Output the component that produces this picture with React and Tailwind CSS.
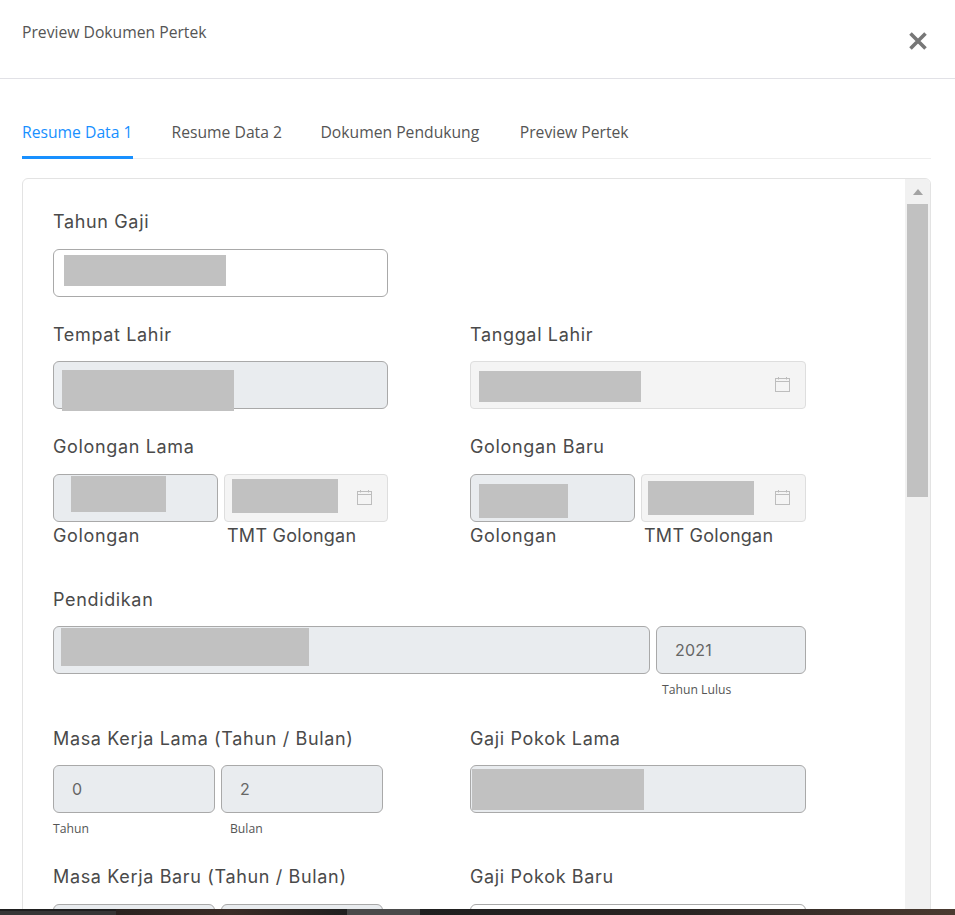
import React from 'react';

const labelFont = "font-['Inter','Liberation_Sans',sans-serif]";
const uiFont = "font-['Open_Sans','Noto_Sans',sans-serif]";

const Redact = ({ className }) => <div className={`absolute bg-[#c1c1c1] ${className}`} />;

const Label = ({ children, className = '' }) => (
  <div className={`h-6 leading-6 text-[18px] text-[#4a4a4a] tracking-[0.65px] whitespace-nowrap ${labelFont} ${className}`}>
    {children}
  </div>
);

const Small = ({ children, className = '' }) => (
  <div className={`h-4 leading-4 text-[12.2px] text-[#555] whitespace-nowrap ${uiFont} ${className}`}>{children}</div>
);

const Input = ({ children, className = '' }) => (
  <div className={`relative h-12 rounded-md border border-[#a9a9a9] bg-[#e9ecef] text-[16px] leading-[46px] text-[#666] tracking-[0.2px] ${labelFont} ${className}`}>
    {children}
  </div>
);

const DateInput = ({ children, className = '' }) => (
  <div className={`relative h-12 rounded-sm border border-[#dedede] bg-[#f4f4f4] ${className}`}>
    {children}
    <svg className="absolute right-[15px] top-[15px]" width="15" height="15" viewBox="0 0 15 15" fill="none" stroke="#bdbdbd" strokeWidth="1">
      <rect x="0.5" y="1.5" width="14" height="13" />
      <path d="M0.5 4.5H14.5M3.5 0V2.5M11.5 0V2.5" />
    </svg>
  </div>
);

const App = () => {
  return (
    <div className="relative h-[915px] w-[955px] overflow-hidden bg-white">
      <div className="flex h-[79px] justify-between border-b border-[#e1e1e6] pl-[22px] pr-[28px]">
        <div className={`pt-[21px] text-[15.7px] leading-[22px] text-[#555] ${uiFont}`}>Preview Dokumen Pertek</div>
        <svg className="mt-[32px]" width="18" height="18" viewBox="0 0 18 18" stroke="#777" strokeWidth="3.6">
          <path d="M1.5 1.5L16.5 16.5M16.5 1.5L1.5 16.5" />
        </svg>
      </div>

      <div className="ml-[22px] mr-[24px] mt-[26px] flex h-[54px] gap-[38.5px] border-b border-[#eeeeee]">
        <div className={`h-[54px] w-[111px] border-b-[3px] border-[#1890ff] pt-[15px] text-[15.7px] leading-[24px] text-[#1890ff] whitespace-nowrap ${uiFont}`}>Resume Data 1</div>
        <div className={`pt-[15px] text-[15.7px] leading-[24px] text-[#555] ${uiFont}`}>Resume Data 2</div>
        <div className={`pt-[15px] text-[15.7px] leading-[24px] text-[#555] ${uiFont}`}>Dokumen Pendukung</div>
        <div className={`ml-[2px] pt-[15px] text-[15.7px] leading-[24px] text-[#555] ${uiFont}`}>Preview Pertek</div>
      </div>

      <div className="ml-[22px] mr-[24px] mt-[19px] flex h-[760px] overflow-hidden rounded-t-md border border-[#e3e3e3]">
        <div className="w-[882px] pl-[30px] pt-[31px]">
          <Label>Tahun Gaji</Label>
          <Input className="mt-[15px] w-[335px] !bg-white">
            <Redact className="left-[10px] top-[5px] h-[31px] w-[162px]" />
          </Input>

          <div className="mt-[26px] grid w-[753px] grid-cols-[335px_336px] gap-x-[82px]">
            <div>
              <Label>Tempat Lahir</Label>
              <Input className="mt-[14px]">
                <Redact className="left-[8px] top-[8px] h-[41px] w-[172px]" />
              </Input>
            </div>
            <div>
              <Label>Tanggal Lahir</Label>
              <DateInput className="mt-[14px]">
                <Redact className="left-[8px] top-[9px] h-[31px] w-[162px]" />
              </DateInput>
            </div>
          </div>

          <div className="mt-[26px] grid w-[753px] grid-cols-[335px_336px] gap-x-[82px]">
            <div>
              <Label>Golongan Lama</Label>
              <div className="mt-[15px] grid grid-cols-[165px_164px] gap-x-[6px]">
                <Input>
                  <Redact className="left-[17px] top-[1px] h-[36px] w-[95px]" />
                </Input>
                <DateInput>
                  <Redact className="left-[7px] top-[4px] h-[34px] w-[106px]" />
                </DateInput>
              </div>
              <div className="mt-[2px] grid grid-cols-[165px_164px] gap-x-[6px]">
                <Label>Golongan</Label>
                <Label className="pl-[3px] !tracking-[0.25px]">TMT Golongan</Label>
              </div>
            </div>
            <div>
              <Label>Golongan Baru</Label>
              <div className="mt-[15px] grid grid-cols-[165px_165px] gap-x-[6px]">
                <Input>
                  <Redact className="left-[8px] top-[9px] h-[34px] w-[89px]" />
                </Input>
                <DateInput>
                  <Redact className="left-[6px] top-[6px] h-[34px] w-[106px]" />
                </DateInput>
              </div>
              <div className="mt-[2px] grid grid-cols-[165px_165px] gap-x-[6px]">
                <Label>Golongan</Label>
                <Label className="pl-[3px] !tracking-[0.25px]">TMT Golongan</Label>
              </div>
            </div>
          </div>

          <Label className="mt-[40px]">Pendidikan</Label>
          <div className="mt-[14px] grid w-[753px] grid-cols-[597px_150px] gap-x-[6px]">
            <Input>
              <Redact className="left-[7px] top-[1px] h-[38px] w-[248px]" />
            </Input>
            <Input className="pl-[18px]">2021</Input>
          </div>
          <div className="mt-[8px] w-[753px] pl-[609px]">
            <Small>Tahun Lulus</Small>
          </div>

          <div className="mt-[29px] grid w-[753px] grid-cols-[335px_336px] gap-x-[82px]">
            <div>
              <Label>Masa Kerja Lama (Tahun / Bulan)</Label>
              <div className="mt-[14px] grid grid-cols-[162px_162px] gap-x-[6px]">
                <Input className="pl-[18px]">0</Input>
                <Input className="pl-[18px]">2</Input>
              </div>
              <div className="mt-[8px] flex">
                <Small className="w-[177px]">Tahun</Small>
                <Small>Bulan</Small>
              </div>
            </div>
            <div>
              <Label>Gaji Pokok Lama</Label>
              <Input className="mt-[14px]">
                <Redact className="left-[1px] top-[3px] h-[41px] w-[172px]" />
              </Input>
            </div>
          </div>

          <div className="mt-[28px] grid w-[753px] grid-cols-[335px_336px] gap-x-[82px]">
            <div>
              <Label>Masa Kerja Baru (Tahun / Bulan)</Label>
              <div className="mt-[15px] grid grid-cols-[162px_162px] gap-x-[6px]">
                <Input />
                <Input />
              </div>
            </div>
            <div>
              <Label>Gaji Pokok Baru</Label>
              <Input className="mt-[15px] !bg-white" />
            </div>
          </div>
        </div>

        <div className="w-[25px] shrink-0 bg-[#f1f1f1] px-[2px]">
          <div className="flex h-[25px] items-center justify-center pt-[1px]">
            <div className="h-0 w-0 border-x-[5.5px] border-b-[6px] border-x-transparent border-b-[#a3a3a3]" />
          </div>
          <div className="h-[293px] bg-[#c1c1c1]" />
        </div>
      </div>

      <div className="absolute bottom-0 left-0 flex h-[6px] w-full">
        <div className="w-[116px] border-t-2 border-[#1f1f1f] bg-[#363636]" />
        <div className="w-[231px] bg-gradient-to-r from-[#2a2320] via-[#3a2c26] to-[#202020]" />
        <div className="w-[73px] bg-[#4a4a4a]" />
        <div className="flex-1 bg-gradient-to-r from-[#1f1f1f] via-[#2a2523] to-[#4a3a30]" />
      </div>
    </div>
  );
};

export default App;
